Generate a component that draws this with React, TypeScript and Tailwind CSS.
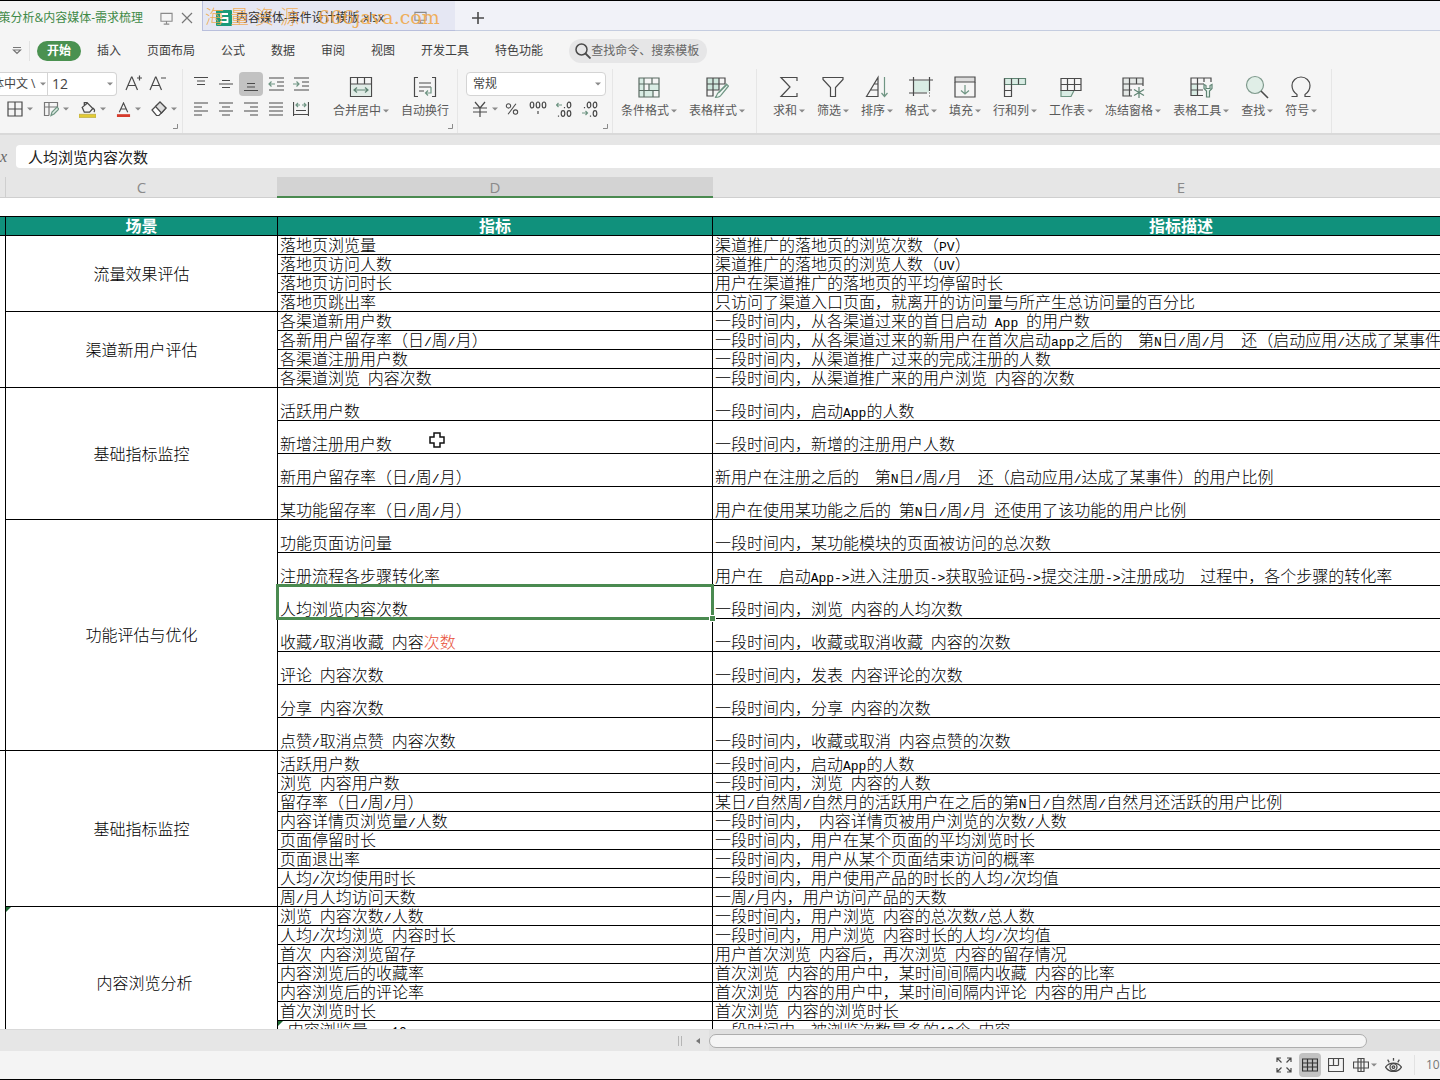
import React from "react";

type Row = { metric: string; desc: string; accent?: string; height?: string; selected?: boolean; cursor?: boolean; flag?: boolean };
type Group = { scene: string; rows: Row[]; flag?: boolean };

const TALL = "h-[33px]";

const groups: Group[] = [
  {
    scene: "流量效果评估",
    rows: [
      { metric: "落地页浏览量", desc: "渠道推广的落地页的浏览次数（PV）" },
      { metric: "落地页访问人数", desc: "渠道推广的落地页的浏览人数（UV）" },
      { metric: "落地页访问时长", desc: "用户在渠道推广的落地页的平均停留时长" },
      { metric: "落地页跳出率", desc: "只访问了渠道入口页面，就离开的访问量与所产生总访问量的百分比" },
    ],
  },
  {
    scene: "渠道新用户评估",
    rows: [
      { metric: "各渠道新用户数", desc: "一段时间内，从各渠道过来的首日启动 App 的用户数" },
      { metric: "各新用户留存率（日/周/月）", desc: "一段时间内，从各渠道过来的新用户在首次启动app之后的  第N日/周/月  还（启动应用/达成了某事件）的用户比例" },
      { metric: "各渠道注册用户数", desc: "一段时间内，从渠道推广过来的完成注册的人数" },
      { metric: "各渠道浏览 内容次数", desc: "一段时间内，从渠道推广来的用户浏览 内容的次数" },
    ],
  },
  {
    scene: "基础指标监控",
    rows: [
      { metric: "活跃用户数", desc: "一段时间内，启动App的人数", height: TALL },
      { metric: "新增注册用户数", desc: "一段时间内，新增的注册用户人数", height: TALL, cursor: true },
      { metric: "新用户留存率（日/周/月）", desc: "新用户在注册之后的  第N日/周/月  还（启动应用/达成了某事件）的用户比例", height: TALL },
      { metric: "某功能留存率（日/周/月）", desc: "用户在使用某功能之后的 第N日/周/月 还使用了该功能的用户比例", height: TALL },
    ],
  },
  {
    scene: "功能评估与优化",
    rows: [
      { metric: "功能页面访问量", desc: "一段时间内，某功能模块的页面被访问的总次数", height: TALL },
      { metric: "注册流程各步骤转化率", desc: "用户在  启动App->进入注册页->获取验证码->提交注册->注册成功  过程中，各个步骤的转化率", height: TALL },
      { metric: "人均浏览内容次数", desc: "一段时间内，浏览 内容的人均次数", height: TALL, selected: true },
      { metric: "收藏/取消收藏 内容", accent: "次数", desc: "一段时间内，收藏或取消收藏 内容的次数", height: TALL },
      { metric: "评论 内容次数", desc: "一段时间内，发表 内容评论的次数", height: TALL },
      { metric: "分享 内容次数", desc: "一段时间内，分享 内容的次数", height: TALL },
      { metric: "点赞/取消点赞 内容次数", desc: "一段时间内，收藏或取消 内容点赞的次数", height: TALL },
    ],
  },
  {
    scene: "基础指标监控",
    rows: [
      { metric: "活跃用户数", desc: "一段时间内，启动App的人数", height: "h-[23px]" },
      { metric: "浏览 内容用户数", desc: "一段时间内，浏览 内容的人数" },
      { metric: "留存率（日/周/月）", desc: "某日/自然周/自然月的活跃用户在之后的第N日/自然周/自然月还活跃的用户比例" },
      { metric: "内容详情页浏览量/人数", desc: "一段时间内， 内容详情页被用户浏览的次数/人数" },
      { metric: "页面停留时长", desc: "一段时间内，用户在某个页面的平均浏览时长" },
      { metric: "页面退出率", desc: "一段时间内，用户从某个页面结束访问的概率" },
      { metric: "人均/次均使用时长", desc: "一段时间内，用户使用产品的时长的人均/次均值" },
      { metric: "周/月人均访问天数", desc: "一周/月内，用户访问产品的天数" },
    ],
  },
  {
    scene: "内容浏览分析",
    flag: true,
    rows: [
      { metric: "浏览 内容次数/人数", desc: "一段时间内，用户浏览 内容的总次数/总人数" },
      { metric: "人均/次均浏览 内容时长", desc: "一段时间内，用户浏览 内容时长的人均/次均值" },
      { metric: "首次 内容浏览留存", desc: "用户首次浏览 内容后，再次浏览 内容的留存情况" },
      { metric: "内容浏览后的收藏率", desc: "首次浏览 内容的用户中，某时间间隔内收藏 内容的比率" },
      { metric: "内容浏览后的评论率", desc: "首次浏览 内容的用户中，某时间间隔内评论 内容的用户占比" },
      { metric: "首次浏览时长", desc: "首次浏览 内容的浏览时长" },
      { metric: " 内容浏览量:  10", desc: "一段时间内，被浏览次数最多的10个 内容", flag: true },
    ],
  },
];

// rows after which the neighbouring column B has a border
const edgeRows = [8, 19];

// latin runs are set in a half-width face so they line up with the CJK grid
const CellText = ({ text }: { text: string }) => (
  <>
    {text.split(/([ -~]+)/).map((part, i) =>
      i % 2 ? (
        <span key={i} className="font-['Liberation_Mono',monospace] text-[13px] leading-none">{part}</span>
      ) : (
        part
      )
    )}
  </>
);

const Flag = () => (
  <svg className="absolute left-0 top-0" width="5" height="5" viewBox="0 0 5 5"><path d="M0 0h5L0 5z" fill="#1f6b34" /></svg>
);

const Arrow = () => (
  <svg width="6" height="4" viewBox="0 0 6 4" className="shrink-0"><path d="M0 0.5h6L3 3.5z" fill="#8a8a8a" /></svg>
);

const Icon = ({ size = 16, box = 16, children }: { size?: number; box?: number; children: React.ReactNode }) => (
  <svg width={size} height={size} viewBox={`0 0 ${box} ${box}`} fill="none" stroke="#4a4a4a" strokeWidth="1.2" className="shrink-0">
    {children}
  </svg>
);

const Corner = () => (
  <button aria-label="更多设置" className="absolute right-1 bottom-1">
    <svg width="5" height="5" viewBox="0 0 5 5" fill="none" stroke="#8a8a8a"><path d="M4.5 0v4.5H0" /></svg>
  </button>
);

const Tool = ({ label, arrow = true, children }: { label: string; arrow?: boolean; children: React.ReactNode }) => (
  <button className="flex flex-col items-center gap-1 text-xs leading-4 text-[#5a5a5a] whitespace-nowrap">
    <Icon size={24} box={24}>{children}</Icon>
    <span className="flex items-center gap-0.5">
      {label}
      {arrow && <Arrow />}
    </span>
  </button>
);

const Small = ({ label, arrow, active, children }: { label: string; arrow?: boolean; active?: boolean; children: React.ReactNode }) => (
  <button
    aria-label={label}
    className={`flex h-6 items-center justify-center gap-1 rounded-sm ${arrow ? "" : "w-6"} ${active ? "bg-[#c2c2c2]" : ""}`}
  >
    {children}
    {arrow && <Arrow />}
  </button>
);

const Monitor = () => (
  <Icon size={13} box={14}><path d="M1 1.500h12v8.500H1zM7 10v3M4 13h6" stroke="#8a8a8a" /></Icon>
);

const menus = ["插入", "页面布局", "公式", "数据", "审阅", "视图", "开发工具", "特色功能"];

const TabBar = () => (
  <div className="relative flex h-[31px] shrink-0 items-stretch border-t border-t-black bg-[#f1f2f8] text-xs">
    <div className="flex w-[202px] shrink-0 items-center bg-[#f5f5f5] pt-1 text-[#3f8a47]">
      <div className="flex w-[143px] shrink-0 justify-end overflow-hidden whitespace-nowrap">策分析&amp;内容媒体-需求梳理</div>
      <span className="ml-[17px]"><Monitor /></span>
      <button aria-label="关闭" className="ml-2">
        <Icon size={12} box={12}><path d="M1 1l10 10M11 1L1 11" stroke="#777" /></Icon>
      </button>
    </div>
    <div className="flex w-[253px] shrink-0 items-center border-l border-b border-[#b9bfdc] bg-[#e5e7f3] pt-1 pl-[13px] text-[#333]">
      <svg width="16" height="16" viewBox="0 0 16 16">
        <rect width="16" height="16" rx="1" fill="#1a9a78" />
        <path d="M12 4H5v4h6.500v4H4" fill="none" stroke="#fff" strokeWidth="1.800" />
      </svg>
      <span className="ml-1 w-[178px] whitespace-nowrap">内容媒体-事件设计模版.xlsx</span>
      <Monitor />
    </div>
    <div className="flex grow items-center border-b border-[#c5cde0] pt-1 pl-[17px]">
      <button aria-label="新建"><Icon size={12} box={12}><path d="M6 0v12M0 6h12" strokeWidth="1.600" /></Icon></button>
    </div>
    <div className="pointer-events-none absolute left-[205px] top-1 whitespace-pre font-['DejaVu_Serif','Noto_Sans_CJK_SC',serif] text-[19px] leading-6 font-light text-[#f0a848]/90">
      海 量 资 源：666java.com
    </div>
  </div>
);

const MenuBar = () => (
  <nav className="flex h-[38px] shrink-0 items-center bg-[#f5f5f5] pt-0.5 text-xs text-[#3f3f3f]">
    <button aria-label="快速访问" className="ml-3">
      <Icon size={10} box={10}><path d="M1 1.500h8M1.500 4h7L5 7.500z" stroke="#777" /></Icon>
    </button>
    <span className="mx-[7px] h-5 w-px bg-[#e2e2e2]" />
    <button className="h-5 w-11 rounded-full bg-[#4a9150] font-bold text-white">开始</button>
    <div className="ml-4 flex gap-[26px]">
      {menus.map((m) => (
        <button key={m} className="whitespace-nowrap">{m}</button>
      ))}
    </div>
    <label className="ml-[26px] flex h-6 w-[138px] items-center rounded-full bg-[#e6e6e7] pl-1.5">
      <Icon><circle cx="6.500" cy="6.500" r="5.500" strokeWidth="1.500" /><path d="M10.500 10.500l5 5" strokeWidth="1.800" /></Icon>
      <input aria-label="查找命令" placeholder="查找命令、搜索模板" className="w-[112px] bg-transparent outline-none placeholder:text-[#666]" />
    </label>
  </nav>
);

const lines = (rows: [number, number][]) => rows.map(([x, w], i) => `M${x} ${2 + i * 4}h${w}`).join("");

const Ribbon = () => (
  <div className="flex h-16 shrink-0 overflow-hidden bg-[#f5f5f5] text-xs text-[#444]">
    <div className="relative flex w-[183px] shrink-0 flex-col gap-px border-r border-[#e6e6e6] pt-[3px]">
      <div className="flex h-6 items-center">
        <div className="flex h-6 w-[117px] items-center rounded-r border border-l-0 border-[#d4d4d4] bg-white">
          <select aria-label="字体" className="-ml-2 w-12 shrink-0 appearance-none outline-none"><option>体中文 \</option></select>
          <span className="flex w-[7px] shrink-0"><Arrow /></span>
          <select aria-label="字号" className="h-6 w-[60px] appearance-none border-l border-[#d4d4d4] pl-1 text-sm outline-none"><option>12</option></select>
          <Arrow />
        </div>
        <button aria-label="增大字号" className="ml-2 w-6">
          <Icon size={18} box={18}><path d="M1 15L6.500 2h.500l5.500 13M3 10.500h7.500M12 3h5M14.500 .500v5" /></Icon>
        </button>
        <button aria-label="减小字号"><Icon size={18} box={18}><path d="M1 15L6.500 2h.500l5.500 13M3 10.500h7.500M12 3h5" /></Icon></button>
      </div>
      <div className="flex items-center gap-2.5 pl-[7px]">
        <Small label="边框" arrow><Icon><path d="M1 1h14v14H1zM8 1v14M1 8h14" /></Icon></Small>
        <Small label="绘图边框" arrow>
          <Icon><path d="M14.500 6V1.500h-13v13H6M6 1.500v13M1.500 6H14" stroke="#777" /><path d="M8 14.500l1-3.500 5-5 2 2-5 5z" fill="#dcebe3" stroke="#6f9583" /></Icon>
        </Small>
        <Small label="填充颜色" arrow>
          <Icon size={17}><path d="M3 6l5-4 5 5-3 3.500H5L3 6zM5 4.500V1.500h3M13 6.500c2 1.500 2 3 1 4" /><path d="M0 12.500h16v3H0z" fill="#e3cb35" stroke="#b5a436" strokeWidth=".6" /></Icon>
        </Small>
        <Small label="字体颜色" arrow>
          <Icon size={15}><path d="M3.500 11L8 1l4.500 10M5 7.500h6" /><path d="M1 13h14v3H1z" fill="#d63a2b" stroke="none" /></Icon>
        </Small>
        <Small label="清除" arrow>
          <Icon><path d="M1 9l8-8 6 6-7 7.500H5.500z" fill="#fff" /><path d="M4.500 5.500L9 1l6 6-4.500 5z" fill="#dedede" /></Icon>
        </Small>
      </div>
      <Corner />
    </div>

    <div className="relative flex w-[275px] shrink-0 border-r border-[#e6e6e6] pt-[3px] pl-1.5">
      <div className="flex flex-col gap-px">
        <div className="flex gap-px">
          <Small label="顶端对齐"><Icon><path d="M1 1.500h14M4 5h8M4 8.500h8" /></Icon></Small>
          <Small label="垂直居中"><Icon><path d="M4 4.500h8M1 8h14M4 11.500h8" /></Icon></Small>
          <Small label="底端对齐" active><Icon><path d="M4 7.500h8M4 11h8M1 14.500h14" /></Icon></Small>
          <Small label="减少缩进"><Icon><path d="M1 2h15M9 6h7M9 10h7M1 14h15" /><path d="M7 8H1M3.500 5.500L1 8l2.500 2.500" stroke="#6f9583" /></Icon></Small>
          <Small label="增加缩进"><Icon><path d="M1 2h15M9 6h7M9 10h7M1 14h15" /><path d="M0 8h6M3.500 5.500L6 8l-2.500 2.500" stroke="#6f9583" /></Icon></Small>
        </div>
        <div className="flex gap-px">
          <Small label="左对齐"><Icon><path d={lines([[1, 14], [1, 8], [1, 14], [1, 8]])} /></Icon></Small>
          <Small label="水平居中"><Icon><path d={lines([[1, 14], [4, 8], [1, 14], [4, 8]])} /></Icon></Small>
          <Small label="右对齐"><Icon><path d={lines([[1, 14], [7, 8], [1, 14], [7, 8]])} /></Icon></Small>
          <Small label="两端对齐"><Icon><path d={lines([[1, 14], [1, 14], [1, 14], [1, 14]])} /></Icon></Small>
          <Small label="分散对齐"><Icon><path d="M.500 1v14M15.500 1v14M3 9.500h10M1 13.500h14" /><path d="M3 4h4M9 4h4M5 2L3 4l2 2M11 2l2 2-2 2" stroke="#6f9583" /></Icon></Small>
        </div>
      </div>
      <div className="flex gap-3 pt-[3px] pl-5">
        <Tool label="合并居中">
          <path d="M1.500 2.500h21v19h-21z" /><path d="M2 9.500h20v11.500H2z" fill="#e0ebe6" stroke="none" /><path d="M1.500 9h21M8.500 2.500V9M15.500 2.500V9" /><path d="M5 15h14M8 12.500L5 15l3 2.500M16 12.500l3 2.500-3 2.500" stroke="#5f8473" />
        </Tool>
        <Tool label="自动换行" arrow={false}>
          <path d="M5 2.500H1.500v19H5M19 2.500h3.500v19H19M6 8h12M6 12h12M6 16h5" /><path d="M18 12v6h-5M15 15.500L12.500 18l2.500 2.500" stroke="#6f9583" />
        </Tool>
      </div>
      <Corner />
    </div>

    <div className="relative flex w-[155px] shrink-0 flex-col gap-px border-r border-[#e6e6e6] pt-[3px] pl-2">
      <div className="flex h-6 w-[140px] items-center rounded border border-[#d4d4d4] bg-white pr-1">
        <select aria-label="数字格式" className="grow appearance-none pl-1.5 outline-none"><option>常规</option></select>
        <Arrow />
      </div>
      <div className="flex items-center gap-0.5 pl-1.5">
        <Small label="货币" arrow><Icon><path d="M3 1l5 6 5-6M1 7h14M1 11h14M8 7v9" /></Icon></Small>
        <Small label="百分比"><Icon size={14}><circle cx="4" cy="4.500" r="2.500" /><circle cx="12" cy="11.500" r="2.500" /><path d="M12.500 2l-9 12" /></Icon></Small>
        <Small label="千位分隔"><Icon size={18} box={18}><ellipse cx="3" cy="5" rx="1.800" ry="3" /><ellipse cx="9" cy="5" rx="1.800" ry="3" /><ellipse cx="15" cy="5" rx="1.800" ry="3" /><path d="M9 11v3" /></Icon></Small>
        <Small label="增加小数"><Icon><path d="M0 4h6M2.500 2L.500 4l2 2" stroke="#6f9583" /><ellipse cx="13" cy="4" rx="1.800" ry="2.800" /><ellipse cx="7" cy="12.500" rx="1.800" ry="2.800" /><ellipse cx="13" cy="12.500" rx="1.800" ry="2.800" /><path d="M8.500 6v1.200M2.500 14.500v1.200" /></Icon></Small>
        <Small label="减少小数"><Icon><path d="M0 12h6M3.500 10l2 2-2 2" stroke="#6f9583" /><ellipse cx="7" cy="4" rx="1.800" ry="2.800" /><ellipse cx="13" cy="4" rx="1.800" ry="2.800" /><ellipse cx="13" cy="12.500" rx="1.800" ry="2.800" /><path d="M2.500 6v1.200M8.500 14.500v1.200" /></Icon></Small>
      </div>
      <Corner />
    </div>

    <div className="flex w-[144px] shrink-0 gap-3 border-r border-[#e6e6e6] pt-1.5 pl-2">
      <Tool label="条件格式">
        <path d="M2 3h5v19H2zM12 9h10v6H12zM7 15h9v7H7z" fill="#d9ece4" stroke="none" /><path d="M2 3h20v19H2zM7 3v19M2 9h20M2 15.500h20M15 3v6M12 9v6M16 15.500V22" stroke="#5a6b63" />
      </Tool>
      <Tool label="表格样式">
        <path d="M2 3h12v12H2z" fill="#cfe8dd" stroke="none" /><path d="M20 8V3H2v18h6v-6h6V3M8 3v12M2 9h18V7M2 15h8" /><path d="M22 9.500l-8 8M23.500 11l-7 8.500c-1 2-3 3-6.500 3 2-1 1.500-3 3-4.500l8.500-9z" fill="#f2faf6" stroke="#6f9583" />
      </Tool>
    </div>

    <div className="flex w-[575px] shrink-0 gap-3 border-r border-[#e6e6e6] pt-1.5 pl-4">
      <Tool label="求和"><path d="M20 6V2.500H4l9 9.500-9 9.500h16V18" /></Tool>
      <Tool label="筛选"><path d="M2 2.500h20v2l-7.500 8v9h-5v-9L2 4.500z" /></Tool>
      <Tool label="排序"><path d="M1.500 21.500L13 2.500v19zM5.500 15H13M9 9h4M3 21.500h10" /><path d="M19.500 2v19M16.500 18l3 3.500 3-3.500" stroke="#6f9583" /></Tool>
      <Tool label="格式"><path d="M4 5.500h16v12H4z" fill="#d9ece4" stroke="none" /><path d="M4.500 2v19M20.500 2v14M0 5h24M0 18h18M20 18h1M20 21h1" /></Tool>
      <Tool label="填充"><path d="M2 2h20v5H2z" fill="#dcdcdc" /><path d="M2 7v15h20V7" /><path d="M12 10v9M8 15.500l4 3.500 4-3.500" stroke="#6f9583" /></Tool>
      <Tool label="行和列"><path d="M1.500 3.500h21v6h-21z" fill="#d9ece4" stroke="#5f8473" /><path d="M8.500 3.500v18h-7v-18M15.500 3.500v6M1.500 15.500h7" /></Tool>
      <Tool label="工作表"><path d="M2 15.500h13l-3 6H2z" fill="#d9ece4" stroke="#6f9583" /><path d="M2 3.500h20v12H2zM2 9.500h20M8.500 3.500v12M15.500 3.500v12" /></Tool>
      <Tool label="冻结窗格"><path d="M2 3h20v6H9v12H2z" fill="#e4e8e6" stroke="none" /><path d="M22 11V3H2v18h9M2 9h20M2 15h9M8.500 3v18M15.500 3v6" /><path d="M18 12v11M13 14.500l10 6M23 14.500l-10 6" stroke="#5f8473" /></Tool>
      <Tool label="表格工具"><path d="M2 9h6v12H2z" fill="#d9ece4" stroke="none" /><path d="M22 7V3H2v17.500h12M2 9h13M2 15h12M8.500 3v17.500M15 3v4" /><path d="M15 9.500v4l2.500 2.500v6h3v-6l2.500-2.500v-4l-2 1v3h-4v-3z" fill="#e6f5ee" stroke="#5f8473" /></Tool>
      <Tool label="查找"><circle cx="10" cy="10" r="8.500" fill="#e0eee7" stroke="#7f9a8d" /><path d="M16 16l7 7" strokeWidth="1.600" /></Tool>
      <Tool label="符号"><path d="M2.500 21.500H8v-2c-3-2-5-5-5-9a9 8.500 0 0 1 18 0c0 4-2 7-5 9v2h5.500" /></Tool>
    </div>
  </div>
);

const Sheet = () => {
  let n = 0;
  return (
    <div className="min-h-0 grow overflow-hidden bg-white">
      <div className="h-[18px]" />
      <table className="w-[1649px] table-fixed border-separate border-spacing-0 text-base leading-[18px] text-black">
        <colgroup>
          <col className="w-[6px]" />
          <col className="w-[272px]" />
          <col className="w-[435px]" />
          <col className="w-[936px]" />
        </colgroup>
        <thead>
          <tr className="h-5 bg-[#10917c] font-bold text-white">
            <th className="border-y border-r border-black p-0" />
            <th className="border-y border-r border-black p-0">场景</th>
            <th className="border-y border-r border-black p-0">指标</th>
            <th className="border-y border-black p-0">指标描述</th>
          </tr>
        </thead>
        <tbody className="font-light">
          {groups.map((g, gi) =>
            g.rows.map((r, i) => {
              n += 1;
              return (
                <tr key={`${gi}-${i}`} className={r.height ?? "h-[19px]"}>
                  <td className={`border-r border-black p-0 ${edgeRows.includes(n) ? "border-b" : ""}`} />
                  {i === 0 && (
                    <td rowSpan={g.rows.length} className="relative border-r border-b border-black p-0 text-center align-middle">
                      {g.flag && <Flag />}
                      {/* the last scene runs on below the visible rows */}
                      <div className={g.flag ? "pt-5 pl-1.5" : ""}>{g.scene}</div>
                    </td>
                  )}
                  <td className="relative border-r border-b border-black p-0 pl-0.5 align-bottom whitespace-pre">
                    {r.flag && <Flag />}
                    <CellText text={r.metric} />
                    {r.accent && <span className="text-[#e8523a]">{r.accent}</span>}
                    {r.selected && (
                      <div className="absolute -inset-x-0.5 -top-0.5 -bottom-0.5 z-10 border-[3px] border-[#4a8a50]">
                        <span className="absolute -right-1 -bottom-1 size-[5px] bg-[#4a8a50] outline outline-white" />
                      </div>
                    )}
                    {r.cursor && (
                      <svg className="absolute left-[151px] top-[11px] z-10" width="16" height="16" viewBox="0 0 16 16">
                        <path d="M5 1h6v4h4v6h-4v4H5v-4H1V5h4z" fill="#fff" stroke="#111" strokeWidth="1.500" />
                      </svg>
                    )}
                  </td>
                  <td className="border-b border-black p-0 pl-0.5 align-bottom whitespace-pre"><CellText text={r.desc} /></td>
                </tr>
              );
            })
          )}
        </tbody>
      </table>
    </div>
  );
};

const StatusBar = () => (
  <div className="flex h-[29px] shrink-0 items-center justify-end border-b border-black bg-[#f4f4f4] text-xs text-[#777]">
    <button aria-label="全屏显示" className="mr-[7px]">
      <Icon><path d="M1 5V1h4M1 1l4.500 4.500M11 1h4v4M15 1l-4.500 4.500M1 11v4h4M1 15l4.500-4.500M15 11v4h-4M15 15l-4.500-4.500" /></Icon>
    </button>
    <button aria-label="普通视图" className="mr-[7px] flex h-6 w-[22px] items-center justify-center rounded-sm bg-[#c2c2c2]">
      <Icon><path d="M.500 2h15v12H.500zM.500 6h15M.500 10h15M5.500 2v12M10.500 2v12" stroke="#333" /></Icon>
    </button>
    <button aria-label="分页预览" className="mr-[9px]"><Icon><path d="M.500 1.500h15v13H.500zM5.500 1.500v7M10.500 1.500v7M.500 8.500h10" /></Icon></button>
    <button aria-label="页面布局" className="mr-2 flex items-center gap-0.5"><Icon><path d="M5 1.500h6v13H5zM.500 5h15v6H.500zM8 1.500v13" /></Icon><Arrow /></button>
    <button aria-label="护眼模式" className="mr-3">
      <Icon size={17}><path d="M.500 9.500C4 4.500 12 4.500 15.500 9.500 12 15 4 15 .500 9.500z" /><circle cx="8" cy="9.500" r="3.300" /><circle cx="8" cy="9.500" r="1.200" /><path d="M8 1v2.500M2.500 2.500L4 5M13.500 2.500L12 5" /></Icon>
    </button>
    <span className="h-5 w-px bg-[#e2e2e2]" />
    <span className="w-[25px] overflow-hidden pl-[11px] whitespace-nowrap">100%</span>
  </div>
);

const App: React.FC = () => {
  return (
    <div className="flex h-screen w-full flex-col overflow-hidden bg-[#e6e6e6] font-['Open_Sans','Noto_Sans_CJK_SC',sans-serif]">
      <TabBar />
      <MenuBar />
      <Ribbon />
      <div className="flex h-11 shrink-0 items-center border-t-2 border-[#d9d9d9] pt-px">
        <span className="w-4 shrink-0 overflow-hidden font-['Liberation_Serif',serif] text-base text-[#666] italic">x</span>
        <input aria-label="编辑栏" defaultValue="人均浏览内容次数" className="h-[23px] grow rounded-l bg-white pl-3 text-[15px] text-[#222] outline-none" />
      </div>
      <div className="flex h-[21px] shrink-0 overflow-hidden text-[15px] leading-5 text-[#8a8a8a]">
        <div className="w-[6px] shrink-0 border-r border-b border-[#cfcfcf]" />
        <div className="w-[271px] shrink-0 border-b border-[#cfcfcf] text-center">C</div>
        <div className="w-[436px] shrink-0 border-b-2 border-[#4a8a50] bg-[#d3d3d3] text-center">D</div>
        <div className="w-[936px] shrink-0 border-b border-[#cfcfcf] text-center">E</div>
      </div>
      <Sheet />
      <div className="flex h-[22px] shrink-0 items-center border-t border-[#d9d9d9]">
        <div className="flex w-[709px] shrink-0 items-center justify-end gap-3 pr-[7px]">
          <span className="h-2.5 w-1 border-x border-[#b5b5b5]" />
          <button aria-label="向左滚动" className="flex w-2 justify-center">
            <svg width="4" height="6" viewBox="0 0 4 6"><path d="M4 0v6L0 3z" fill="#777" /></svg>
          </button>
        </div>
        <div className="flex h-full grow items-center bg-[#e0e0e0]">
          <div className="h-3.5 w-[90%] rounded-full border border-[#adadad] bg-[#f5f5f5]" />
        </div>
      </div>
      <StatusBar />
    </div>
  );
};

export default App;
